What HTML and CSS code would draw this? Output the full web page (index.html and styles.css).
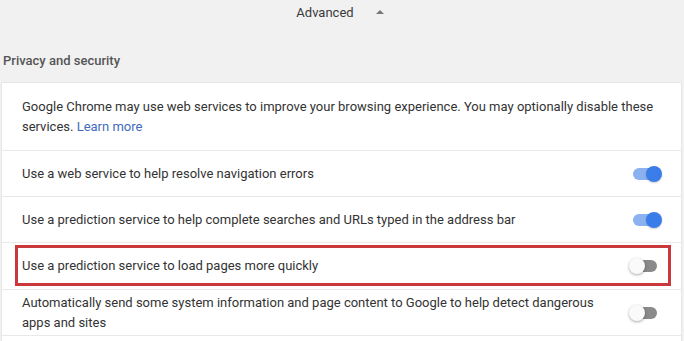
FILE: index.html
```html
<!DOCTYPE html>
<html lang="en">
<head>
    <meta charset="UTF-8">
    <title>Settings - Advanced</title>
    <link rel="stylesheet" href="styles.css">
</head>
<body>

    <div class="advanced">
        <span>Advanced</span>
        <span class="arrow"></span>
    </div>

    <h2 class="section-title">Privacy and security</h2>

    <div class="card">
        <div class="row intro">
            Google Chrome may use web services to improve your browsing experience. You may optionally disable these services. <a href="#">Learn more</a>
        </div>

        <div class="row">
            <span class="label">Use a web service to help resolve navigation errors</span>
            <span class="toggle on"></span>
        </div>

        <div class="row">
            <span class="label">Use a prediction service to help complete searches and URLs typed in the address bar</span>
            <span class="toggle on"></span>
        </div>

        <div class="row marked">
            <div class="mark">
                <span class="label">Use a prediction service to load pages more quickly</span>
                <span class="toggle"></span>
            </div>
        </div>

        <div class="row">
            <span class="label">Automatically send some system information and page content to Google to help detect dangerous apps and sites</span>
            <span class="toggle"></span>
        </div>

        <div class="row rest"></div>
    </div>

</body>
</html>
```

FILE: styles.css
```css
body {
    margin: 0;
    background-color: #f1f1f1;
    font-family: Roboto, "Noto Sans", sans-serif;
    font-size: 13px;
    color: #333;
}
.advanced {
    display: flex;
    justify-content: center;
    align-items: center;
    gap: 22px;
    height: 24px;
    font-size: 13px;
    color: #3a3a3a;
    padding-right: 4px;
}
.arrow {
    width: 0;
    height: 0;
    border-left: 4px solid transparent;
    border-right: 4px solid transparent;
    border-bottom: 4px solid #777;
    margin-top: -1px;
}
.section-title {
    margin: 0;
    padding: 28px 0 0 3px;
    height: 31px;
    font-size: 13px;
    font-weight: 500;
    color: #555;
    line-height: 18px;
}
.card {
    margin: 0 3px 0 2px;
    background-color: #fff;
    box-shadow: 0 0 1px rgba(0, 0, 0, 0.25);
}
.row {
    display: flex;
    align-items: center;
    justify-content: space-between;
    min-height: 46px;
    padding: 0 22px 0 20px;
    line-height: 20px;
    border-top: 1px solid #e9e9e9;
    box-sizing: border-box;
}
.row:first-child {
    border-top: none;
}
.row.intro {
    display: block;
    padding-top: 14px;
    padding-bottom: 13px;
}
.intro a {
    color: #3f6bbf;
    text-decoration: none;
}
.row.rest {
    min-height: 6px;
}
.label {
    max-width: 600px;
}
.row.marked {
    padding: 2px 10px 3px 13px;
}
.mark {
    flex: 1;
    display: flex;
    align-items: center;
    justify-content: space-between;
    height: 35px;
    padding: 0 9px 0 4px;
    border: 3px solid #c9393c;
}
.toggle {
    position: relative;
    flex: none;
    width: 24px;
    height: 12px;
    border-radius: 6px;
    background-color: #8a8a8a;
    margin-right: 2px;
}
.toggle::after {
    content: "";
    position: absolute;
    top: -2px;
    left: -4px;
    width: 16px;
    height: 16px;
    border-radius: 50%;
    background-color: #fafafa;
    box-shadow: 0 1px 3px rgba(0, 0, 0, 0.35);
}
.toggle.on {
    background-color: #8bb1f0;
}
.toggle.on::after {
    left: 13px;
    background-color: #3b7de8;
    box-shadow: 0 1px 2px rgba(0, 0, 0, 0.2);
}
```
